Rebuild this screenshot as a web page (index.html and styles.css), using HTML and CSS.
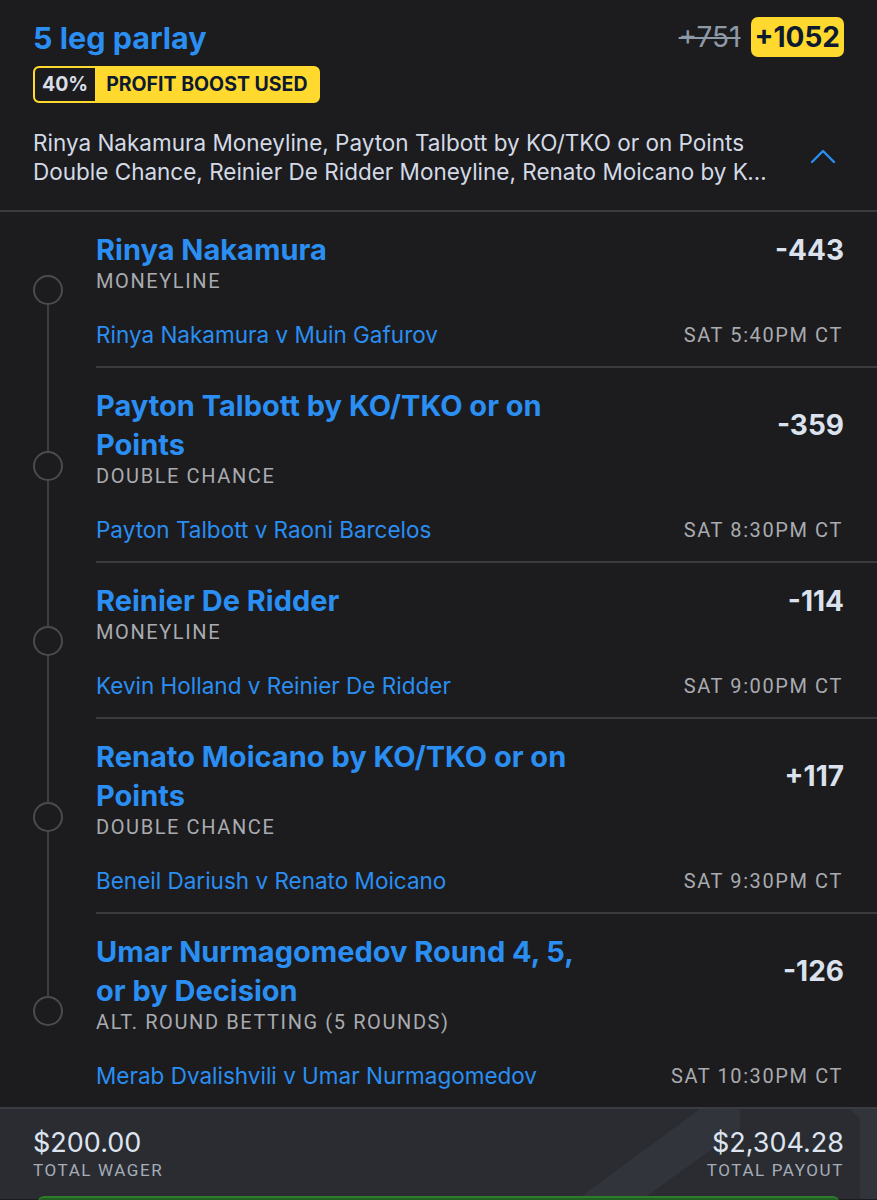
FILE: index.html
```html
<!DOCTYPE html>
<html lang="en">
<head>
  <meta charset="UTF-8" />
  <title>5 leg parlay</title>
  <meta name="viewport" content="width=device-width, initial-scale=1.0"/>
  <link rel="stylesheet" href="styles.css">
</head>
<body>

<div class="slip">

  <header class="parlay-head">
    <div class="head-row">
      <h1 class="parlay-title">5 leg parlay</h1>
      <div class="parlay-odds">
        <span class="odds-old">+751</span>
        <span class="odds-new">+1052</span>
      </div>
    </div>
    <div class="boost">
      <span class="boost-pct">40%</span>
      <span class="boost-label">PROFIT BOOST USED</span>
    </div>
    <div class="summary">
      <p class="summary-text">
        <span class="summary-line">Rinya Nakamura Moneyline, Payton Talbott by KO/TKO or on Points</span>
        <span class="summary-line">Double Chance, Reinier De Ridder Moneyline, Renato Moicano by KO/TKO or on Points Double Chance, Umar Nurmagomedov Round 4, 5, or by Decision Alt. Round Betting (5 Rounds)</span>
      </p>
      <svg class="chevron" width="26" height="16" viewBox="0 0 26 16">
        <path d="M2 14 L13 3 L24 14" fill="none" stroke="#2a8ef2" stroke-width="2.4" stroke-linecap="round" stroke-linejoin="round"/>
      </svg>
    </div>
  </header>

  <!-- ноги экспресса -->
  <section class="legs">

    <div class="leg">
      <div class="rail"><span class="seg seg-off"></span><span class="dot"></span><span class="seg"></span></div>
      <div class="leg-body">
        <div class="leg-top">
          <h2 class="leg-title">Rinya Nakamura</h2>
          <span class="leg-odds">-443</span>
        </div>
        <div class="leg-market">MONEYLINE</div>
        <div class="leg-match">
          <span class="match-name">Rinya Nakamura v Muin Gafurov</span>
          <span class="match-time">SAT 5:40PM CT</span>
        </div>
      </div>
    </div>

    <div class="leg">
      <div class="rail"><span class="seg"></span><span class="dot"></span><span class="seg"></span></div>
      <div class="leg-body">
        <div class="leg-top">
          <h2 class="leg-title">Payton Talbott by KO/TKO or on Points</h2>
          <span class="leg-odds">-359</span>
        </div>
        <div class="leg-market">DOUBLE CHANCE</div>
        <div class="leg-match">
          <span class="match-name">Payton Talbott v Raoni Barcelos</span>
          <span class="match-time">SAT 8:30PM CT</span>
        </div>
      </div>
    </div>

    <div class="leg">
      <div class="rail"><span class="seg"></span><span class="dot"></span><span class="seg"></span></div>
      <div class="leg-body">
        <div class="leg-top">
          <h2 class="leg-title">Reinier De Ridder</h2>
          <span class="leg-odds">-114</span>
        </div>
        <div class="leg-market">MONEYLINE</div>
        <div class="leg-match">
          <span class="match-name">Kevin Holland v Reinier De Ridder</span>
          <span class="match-time">SAT 9:00PM CT</span>
        </div>
      </div>
    </div>

    <div class="leg">
      <div class="rail"><span class="seg"></span><span class="dot"></span><span class="seg"></span></div>
      <div class="leg-body">
        <div class="leg-top">
          <h2 class="leg-title">Renato Moicano by KO/TKO or on Points</h2>
          <span class="leg-odds">+117</span>
        </div>
        <div class="leg-market">DOUBLE CHANCE</div>
        <div class="leg-match">
          <span class="match-name">Beneil Dariush v Renato Moicano</span>
          <span class="match-time">SAT 9:30PM CT</span>
        </div>
      </div>
    </div>

    <div class="leg leg-last">
      <div class="rail"><span class="seg"></span><span class="dot"></span><span class="seg seg-off"></span></div>
      <div class="leg-body">
        <div class="leg-top">
          <h2 class="leg-title">Umar Nurmagomedov Round 4, 5, or by Decision</h2>
          <span class="leg-odds">-126</span>
        </div>
        <div class="leg-market">ALT. ROUND BETTING (5 ROUNDS)</div>
        <div class="leg-match">
          <span class="match-name">Merab Dvalishvili v Umar Nurmagomedov</span>
          <span class="match-time">SAT 10:30PM CT</span>
        </div>
      </div>
    </div>

  </section>

  <footer class="totals">
    <div class="totals-row">
      <div class="total">
        <div class="total-value">$200.00</div>
        <div class="total-label">TOTAL WAGER</div>
      </div>
      <div class="total total-right">
        <div class="total-value">$2,304.28</div>
        <div class="total-label">TOTAL PAYOUT</div>
      </div>
    </div>
    <div class="cta-edge"></div>
  </footer>

</div>

</body>
</html>
```

FILE: styles.css
```css
* {
  margin: 0;
  padding: 0;
  box-sizing: border-box;
  font-family: 'Inter', 'Liberation Sans', sans-serif;
}

body {
  background-color: #1c1c1e;
  color: #dbe2ee;
  width: 877px;
  height: 1200px;
  overflow: hidden;
}

.parlay-head {
  padding: 17px 33px 24px 33px;
  border-bottom: 2px solid #3a3a3f;
}

.head-row {
  display: flex;
  justify-content: space-between;
  align-items: center;
  height: 40px;
}

.parlay-title {
  color: #2a8ef2;
  font-size: 30.5px;
  font-weight: 700;
}

.parlay-odds {
  display: flex;
  align-items: center;
  gap: 10px;
  font-size: 28px;
  font-weight: 700;
}

.odds-old {
  color: #8e99a8;
  font-weight: 400;
  text-decoration: line-through;
  text-decoration-thickness: 2px;
}

.odds-new {
  background: #ffd92e;
  color: #0d1a30;
  border-radius: 7px;
  padding: 0 4px;
  height: 40px;
  line-height: 40px;
}

.boost {
  display: inline-flex;
  margin-top: 9px;
  height: 37px;
  border: 2px solid #ffd92e;
  border-radius: 6px;
  background: #ffd92e;
  overflow: hidden;
  font-size: 19.5px;
  font-weight: 700;
}

.boost-pct {
  background: #1c1c1e;
  color: #d9dee7;
  padding: 0 7px;
  line-height: 33px;
  border-radius: 4px 0 0 4px;
}

.boost-label {
  color: #0d1a30;
  padding: 0 10px 0 11px;
  line-height: 33px;
}

.summary {
  display: flex;
  align-items: center;
  justify-content: space-between;
  margin-top: 25px;
}

.summary-text {
  width: 737px;
  font-size: 22.5px;
  line-height: 29px;
  color: #d3dae6;
}

.summary-line {
  display: block;
  white-space: nowrap;
  overflow: hidden;
  text-overflow: ellipsis;
}

.chevron {
  margin-right: 8px;
  margin-top: -2px;
}

.legs {
  display: flex;
  flex-direction: column;
}

.leg {
  display: flex;
}

.rail {
  width: 96px;
  flex-shrink: 0;
  display: flex;
  flex-direction: column;
  align-items: center;
}

.seg {
  flex: 1;
  width: 2px;
  background: #3d3d42;
}

.seg-off {
  background: transparent;
}

.dot {
  width: 30px;
  height: 30px;
  border: 2px solid #4a4a4f;
  border-radius: 50%;
  flex-shrink: 0;
}

.leg-body {
  flex-grow: 1;
  padding: 18px 33px 19px 0;
  border-bottom: 2px solid #3a3a3f;
}

.leg-last .leg-body {
  border-bottom: none;
}

.leg-top {
  display: flex;
  justify-content: space-between;
  align-items: center;
}

.leg-title {
  max-width: 500px;
  color: #2a8ef2;
  font-size: 29px;
  line-height: 39px;
  font-weight: 700;
}

.leg-odds {
  color: #dbe2ee;
  font-size: 28px;
  font-weight: 700;
}

.leg-market {
  font-family: 'Roboto', 'Liberation Sans', sans-serif;
  color: #a9abb0;
  font-size: 20px;
  line-height: 24px;
  letter-spacing: 1.6px;
}

.leg-match {
  display: flex;
  justify-content: space-between;
  align-items: center;
  margin-top: 30px;
  line-height: 24px;
}

.match-name {
  color: #2a8ef2;
  font-size: 22.5px;
}

.match-time {
  font-family: 'Roboto', 'Liberation Sans', sans-serif;
  color: #a9abb0;
  font-size: 20px;
  letter-spacing: 1.6px;
  margin-right: 1px;
}

.totals {
  border-top: 2px solid #3a3c43;
  background-color: #2a2c32;
  background-image: url("data:image/svg+xml,%3Csvg xmlns='http://www.w3.org/2000/svg' width='877' height='92'%3E%3Cpath d='M575 92 L700 0 L740 0 L740 20 L640 92 Z M850 0 L877 0 L877 92 L860 92 L860 10 Z' fill='%2332343b'/%3E%3C/svg%3E");
  background-repeat: no-repeat;
  height: 92px;
  padding: 18px 33px 0 33px;
}

.totals-row {
  display: flex;
  justify-content: space-between;
}

.total-right {
  text-align: right;
}

.total-value {
  font-size: 27px;
  line-height: 32px;
  color: #dde4ef;
  font-weight: 400;
}

.total-label {
  font-family: 'Roboto', 'Liberation Sans', sans-serif;
  font-size: 17px;
  line-height: 22px;
  color: #a5adb8;
  letter-spacing: 1.6px;
}

.cta-edge {
  margin: 15px 5px 0 5px;
  height: 8px;
  background: #1e5e22;
  border-top: 2px solid #2f7a2b;
  border-radius: 6px 6px 0 0;
}
```
